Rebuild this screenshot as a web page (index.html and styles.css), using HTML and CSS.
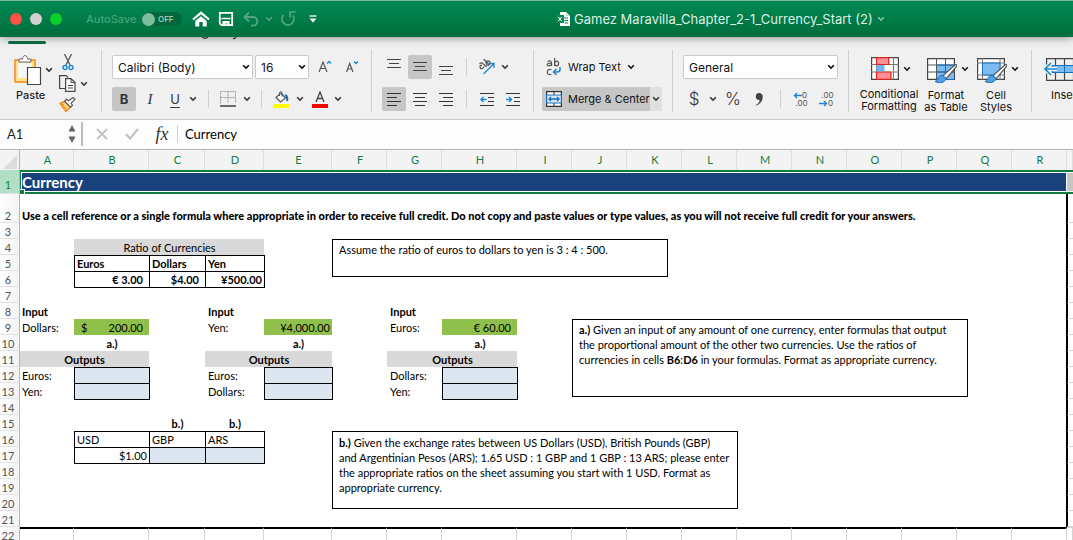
FILE: index.html
```html
<!DOCTYPE html>
<html lang="en">
<head>
<meta charset="utf-8">
<title>Gamez Maravilla_Chapter_2-1_Currency_Start (2)</title>
<link rel="stylesheet" href="styles.css">
</head>
<body>
<svg class="defs" aria-hidden="true">
  <symbol id="chev" viewBox="0 0 8 6"><path d="M1.2 1.2 4 4.2 6.8 1.2" fill="none" stroke="currentColor" stroke-width="1.6"/></symbol>
</svg>
<header class="titlebar">
  <div class="lights"><i class="red"></i><i class="gray"></i><i class="green"></i></div>
  <label class="autosave">AutoSave <span class="switch"><input type="checkbox" aria-label="AutoSave">OFF</span></label>
  <nav class="quick">
    <button aria-label="Home"><svg width="18" height="16" viewBox="0 0 18 16"><path d="M1 8.500 9 1.800l8 6.700" fill="none" stroke="#fff" stroke-width="2.200"/><path d="M3.300 9.900 9 5.200l5.700 4.700V15.500h-4v-4.500H7.300v4.500h-4z" fill="#fff"/></svg></button>
    <button aria-label="Save"><svg width="16" height="16" viewBox="0 0 16 16"><path d="M1.800 1.800h12.400v12.400H3.500l-1.700-1.700z" fill="none" stroke="#fff" stroke-width="1.800"/><path d="M3.500 7.500h9" stroke="#fff" stroke-width="1.400"/><path d="M4.500 10h7v5H9.500v-2.500H7.500V15h-3z" fill="#fff"/></svg></button>
    <button class="dim" aria-label="Undo"><svg width="16" height="16" viewBox="0 0 16 16"><path d="M6 1.500 1.500 6 6 10.500M2 6h8a4.300 4.300 0 0 1 0 8.600H8" fill="none" stroke="currentColor" stroke-width="1.800"/></svg></button>
    <button class="dim small" aria-label="Undo history"><svg width="8" height="6"><use href="#chev"/></svg></button>
    <button class="dim" aria-label="Redo"><svg width="16" height="16" viewBox="0 0 16 16"><path d="M3.500 4A6 6 0 1 0 12.800 4.500M9.500 1h6M10 1v5.500" fill="none" stroke="currentColor" stroke-width="1.700"/></svg></button>
    <button class="more" aria-label="Customize toolbar"><svg width="8" height="8" viewBox="0 0 8 8"><path d="M.5 1h7" stroke="#fff" stroke-width="1.300"/><path d="M.5 3.500h7L4 7.500z" fill="#fff"/></svg></button>
  </nav>
  <h1 class="title"><svg width="14" height="14" viewBox="0 0 14 14"><path d="M4 0h6l4 4v10H4z" fill="#fff"/><path d="M10 0v4h4" fill="#bfe0cf"/><path d="M8.500 6H12M8.500 8.500H12M8.500 11H12" stroke="#087a48"/><path d="M0 3h8v8H0z" fill="#0b8a53"/><path d="m2.300 5 3.400 4m0-4L2.300 9" stroke="#fff"/></svg>Gamez Maravilla_Chapter_2-1_Currency_Start (2)<svg class="tchev" width="8" height="6"><use href="#chev"/></svg></h1>
</header>

<div class="tabstrip"><span class="active-tab"></span><svg width="36" height="3" viewBox="0 0 36 3" aria-hidden="true"><path d="M0 0q3 2.500 6 0M34 0q-1 2-3 1.500" fill="none" stroke="#444" stroke-width="1.300"/></svg></div>

<div class="ribbon">
  <section class="group clip">
    <button class="paste"><span class="icon-row"><svg width="28" height="30" viewBox="0 0 28 30"><path d="M1 5h20v22H1z" fill="#ffdf87" stroke="#f28c1d" stroke-width="1.500"/><path d="M4 8h14v15H4z" fill="#f6f6f6"/><path d="M5 7V4h3.500C8.500-.5 13.500-.5 13.500 4H17v3z" fill="#fff" stroke="#666"/><path d="M13.500 12.500h13v17h-13z" fill="#fff" stroke="#444" stroke-width="1.200"/></svg><svg width="8" height="6"><use href="#chev"/></svg></span><span>Paste</span></button>
    <div class="clip-tools">
      <button aria-label="Cut"><svg width="12" height="17" viewBox="0 0 12 17"><path d="m2.500 0 5.500 11M9.500 0 4 11" stroke="#555" stroke-width="1.300"/><circle cx="3" cy="13.500" r="2" fill="none" stroke="#1a86d4" stroke-width="1.400"/><circle cx="9" cy="13.500" r="2" fill="none" stroke="#1a86d4" stroke-width="1.400"/></svg></button>
      <button class="copy" aria-label="Copy"><svg width="17" height="17" viewBox="0 0 17 17"><path d="M6 13.500H.6V.6H7l2 2" fill="none" stroke="#444" stroke-width="1.200"/><path d="M6.600 3.600H12l4 4v8.800H6.600z" fill="#fff" stroke="#444" stroke-width="1.200"/><path d="M12 3.600v4h4M9 10.500h5M9 13h5" fill="none" stroke="#444"/></svg><svg width="8" height="6"><use href="#chev"/></svg></button>
      <button aria-label="Format painter"><svg width="17" height="15" viewBox="0 0 17 15"><path d="M1 6.500 6 4l5.500 6L7 14.500z" fill="#ffd07a" stroke="#f28c1d" stroke-width="1.400"/><path d="m3.500 8 5 5M2 7l3 .5" stroke="#f28c1d"/><path d="M5.500 4.300 7.500 2l2 1.700L14 .5l2 1.800-4 4 1.500 1.900-2 2z" fill="#fff" stroke="#555" stroke-width="1.200"/></svg></button>
    </div>
  </section>

  <section class="group font">
    <div class="row fields">
      <span class="field"><select aria-label="Font"><option>Calibri (Body)</option></select><svg width="8" height="6"><use href="#chev"/></svg></span>
      <span class="field"><select aria-label="Font size"><option>16</option></select><svg width="8" height="6"><use href="#chev"/></svg></span>
      <button aria-label="Increase font size"><svg width="14" height="14" viewBox="0 0 14 14"><path d="M1 12 5 2l4 10M2.500 8.500h5" fill="none" stroke="#555" stroke-width="1.200"/><path d="m9 3.500 2-2 2 2" fill="none" stroke="#1a86d4" stroke-width="1.400"/></svg></button>
      <button aria-label="Decrease font size"><svg width="14" height="14" viewBox="0 0 14 14"><path d="m.5 12 3.200-8.500L7 12M1.700 9h4" fill="none" stroke="#555" stroke-width="1.200"/><path d="m8 1.500 2 2 2-2" fill="none" stroke="#1a86d4" stroke-width="1.400"/></svg></button>
    </div>
    <div class="row styles">
      <button class="on bold">B</button><button class="italic">I</button><button class="under">U</button><button aria-label="Underline options"><svg width="8" height="6"><use href="#chev"/></svg></button><i class="rule"></i>
      <button aria-label="Borders"><svg width="16" height="16" viewBox="0 0 16 16"><path d="M.5 12.500V.5h15v12M8 .5v12M.5 6.500h15" fill="none" stroke="#999" stroke-dasharray="2 1"/><path d="M0 15h16" stroke="#333" stroke-width="1.400"/></svg></button><button aria-label="Border options"><svg width="8" height="6"><use href="#chev"/></svg></button><i class="rule"></i>
      <button aria-label="Fill color"><svg width="16" height="17" viewBox="0 0 16 17"><path d="M3 6.500 8 2l4.500 5L7.500 11z" fill="#fff" stroke="#555" stroke-width="1.200"/><path d="M6.500 5V1.500q1.500-2 2.500 0v4" fill="none" stroke="#555"/><path d="M12 4q3 1 2 6" fill="none" stroke="#1a6fb8" stroke-width="2"/><path d="M0 13h16v4H0z" fill="#ff0"/></svg></button><button aria-label="Fill options"><svg width="8" height="6"><use href="#chev"/></svg></button>
      <button aria-label="Font color"><svg width="16" height="17" viewBox="0 0 16 17"><path d="M4 11 8 1l4 10M5.300 7.500h5.400" fill="none" stroke="#444" stroke-width="1.300"/><path d="M0 13h16v4H0z" fill="red"/></svg></button><button aria-label="Font color options"><svg width="8" height="6"><use href="#chev"/></svg></button>
    </div>
  </section>

  <section class="group align">
    <div class="row aligns">
      <button aria-label="Top align"><svg width="14" height="18" viewBox="0 0 14 18"><path d="M0 1.500h14M2 5.500h10M0 9.500h14" stroke="#444"/></svg></button><button class="on" aria-label="Middle align"><svg width="14" height="18" viewBox="0 0 14 18"><path d="M0 4.500h14M2 8.500h10M0 12.500h14" stroke="#444"/></svg></button><button aria-label="Bottom align"><svg width="14" height="18" viewBox="0 0 14 18"><path d="M0 8.500h14M2 12.500h10M0 16.500h14" stroke="#444"/></svg></button><i class="rule"></i>
      <button aria-label="Orientation"><svg width="18" height="16" viewBox="0 0 18 16"><g fill="none" stroke="#555" stroke-width="1.200"><path d="M1.500 5q2-2 3.500-.3L8.500 8M4 6.200Q1 7 2.300 9q2 2 3.700-1.500"/><path d="m5.500 0 5.500 5.500"/><ellipse cx="10" cy="4" rx="2" ry="2.200"/></g><path d="M5.500 15 16 4.500M11.500 4.500H16V9" fill="none" stroke="#1a86d4" stroke-width="1.300"/></svg></button><button aria-label="Orientation options"><svg class="near" width="8" height="6"><use href="#chev"/></svg></button>
    </div>
    <div class="row aligns">
      <button class="on" aria-label="Align left"><svg width="14" height="14" viewBox="0 0 14 14"><path d="M0 1.500h14M0 5.500h10M0 9.500h14M0 13.500h10" stroke="#333"/></svg></button><button aria-label="Center"><svg width="14" height="14" viewBox="0 0 14 14"><path d="M0 1.500h14M2 5.500h10M0 9.500h14M2 13.500h10" stroke="#333"/></svg></button><button aria-label="Align right"><svg width="14" height="14" viewBox="0 0 14 14"><path d="M0 1.500h14M4 5.500h10M0 9.500h14M4 13.500h10" stroke="#333"/></svg></button><i class="rule"></i>
      <button aria-label="Decrease indent"><svg width="14" height="14" viewBox="0 0 14 14"><path d="M0 1.500h14M8 5.500h6M8 9.500h6M0 13.500h14" stroke="#333"/><path d="M6.500 7.500H1M3.500 5 1 7.500 3.500 10" fill="none" stroke="#1a86d4" stroke-width="1.400"/></svg></button><button aria-label="Increase indent"><svg width="14" height="14" viewBox="0 0 14 14"><path d="M0 1.500h14M8 5.500h6M8 9.500h6M0 13.500h14" stroke="#333"/><path d="M0 7.500h5.500M3 5l2.500 2.500L3 10" fill="none" stroke="#1a86d4" stroke-width="1.400"/></svg></button>
    </div>
  </section>

  <section class="group wrap">
    <button class="wide"><svg width="16" height="18" viewBox="0 0 16 18"><g fill="none" stroke="#555" stroke-width="1.200"><path d="M1.500 3.500q3.500-1.500 4 1V8M5.500 5.200Q1 5 1 6.800 2 9 5.500 6.800M8.600 0v8"/><ellipse cx="10.600" cy="5.500" rx="2" ry="2.400"/><path d="M5.500 11.800Q1.300 10.500 1.300 14t4.200 2.200"/></g><path d="M14 9v2.500q0 2.500-3 2.500H7.500M10.500 11l-3 3 3 3" fill="none" stroke="#1a86d4" stroke-width="1.500"/></svg><span>Wrap Text</span><svg width="8" height="6"><use href="#chev"/></svg></button>
    <div class="merge"><button class="wide"><svg width="16" height="16" viewBox="0 0 16 16"><path d="M.6.600h14.800v14.800H.6z" fill="#fff" stroke="#333" stroke-width="1.200"/><path d="M8 1v3M8 12v3" stroke="#333"/><path d="M.6 4h14.800v8H.6z" fill="#d4e8fa" stroke="#1a6fb8" stroke-width="1.200"/><path d="M3 8h10M5 6 3 8l2 2M11 6l2 2-2 2" fill="none" stroke="#1a6fb8" stroke-width="1.300"/></svg><span>Merge &amp; Center</span></button><button class="drop" aria-label="Merge options"><svg width="8" height="6"><use href="#chev"/></svg></button></div>
  </section>

  <section class="group number">
    <span class="field"><select aria-label="Number format"><option>General</option></select><svg width="8" height="6"><use href="#chev"/></svg></span>
    <div class="row numbers">
      <button class="sym">$</button><button aria-label="Currency options"><svg width="8" height="6"><use href="#chev"/></svg></button><button class="sym">%</button><button aria-label="Comma style"><svg width="8" height="13" viewBox="0 0 8 13"><path d="M4 0a3.600 3.600 0 0 1 3.700 4.200Q7.500 10 1 12.800L.8 12Q4.500 10 4.600 7A3.500 3.500 0 1 1 4 0z" fill="#444"/></svg></button><i class="rule"></i>
      <button class="dec" aria-label="Increase decimal"><svg class="arr" width="9" height="7" viewBox="0 0 9 7"><path d="M9 3.500H1.500M4 1 1.500 3.500 4 6" fill="none" stroke="#1a86d4" stroke-width="1.400"/></svg><span>0</span><span class="full">.00</span></button>
      <button class="dec" aria-label="Decrease decimal"><span class="full">.00</span><svg class="arr" width="9" height="7" viewBox="0 0 9 7"><path d="M0 3.500h7.500M5 1l2.500 2.500L5 6" fill="none" stroke="#1a86d4" stroke-width="1.400"/></svg><span>0</span></button>
    </div>
  </section>

  <section class="group styles-group">
    <button class="big"><span class="icon-row"><svg width="28" height="23" viewBox="0 0 28 23"><path d="M.6.600h26.800v21.800H.6z" fill="#fff" stroke="#444" stroke-width="1.200"/><path d="M5.500 0v23M17.500 0v23M22.500 0v23M0 7.500h28M0 15h28" stroke="#777"/><path d="M13.500 8h8.500v6.500h-8.500z" fill="#fff"/><path d="M5.500.700h12.300v6.800H5.500zM5.500 15h14.500v7.300H5.500z" fill="#ff8f96" stroke="#d22" stroke-width="1.200"/><path d="M5.500 8h8v6.500h-8z" fill="#6fb4ee"/></svg><svg width="8" height="6"><use href="#chev"/></svg></span><span>Conditional<br>Formatting</span></button>
    <button class="big"><span class="icon-row"><svg width="30" height="28" viewBox="0 0 30 28"><path d="M.6 3.600h26.800v20.800H.6z" fill="#fff" stroke="#444" stroke-width="1.200"/><path d="M9.500 10H27v14.500H9.500z" fill="#7bbcf2"/><path d="M9.500 3v22M18.500 3v22M0 10h28M0 17h28" stroke="#555"/><path d="M9.500 10h18M9.500 24.500h18M18.500 10v14M9.500 17h18" stroke="#1a6fb8"/><path d="M28.500 9.500q2 0 1 2L19 24l-3.500-3z" fill="#fff" stroke="#555" stroke-width="1.200"/><path d="M15.500 20.500Q11 20.500 11 24q-.5 2-3 2.500 5 3 9 0 3-2 1.500-4z" fill="#4fa2e6" stroke="#1a6fb8"/></svg><svg width="8" height="6"><use href="#chev"/></svg></span><span>Format<br>as Table</span></button>
    <button class="big"><span class="icon-row"><svg width="30" height="28" viewBox="0 0 30 28"><path d="M.6 3.600h26.800v20.800H.6z" fill="#fff" stroke="#444" stroke-width="1.200"/><path d="M5.500 3v22M0 8h28M23 3v22M0 20h28" stroke="#777"/><path d="M5.500 8H23v12H5.500z" fill="#7bbcf2" stroke="#1a6fb8"/><path d="M28.500 9.500q2 0 1 2L19 24l-3.500-3z" fill="#fff" stroke="#555" stroke-width="1.200"/><path d="M15.500 20.500Q11 20.500 11 24q-.5 2-3 2.500 5 3 9 0 3-2 1.500-4z" fill="#4fa2e6" stroke="#1a6fb8"/></svg><svg width="8" height="6"><use href="#chev"/></svg></span><span>Cell<br>Styles</span></button>
  </section>

  <section class="group insert">
    <button class="big"><svg width="36" height="23" viewBox="0 0 36 23"><path d="M2.600 7V.600H36M36 22.400H2.600V15M11.500 0v23M20.500 0v23M29.500 0v23" fill="none" stroke="#444" stroke-width="1.200"/><path d="M8 7.500h28v7H8z" fill="#7bbcf2" stroke="#1a6fb8"/><path d="M20.500 7.500v7M29.500 7.500v7" stroke="#1a6fb8"/><path d="M13 11H1.500M7 5 1 11l6 6" fill="none" stroke="#f0f0f0" stroke-width="4"/><path d="M13 11H1.500M7 5 1 11l6 6" fill="none" stroke="#1a86d4" stroke-width="1.600"/></svg><span>Insert</span></button>
  </section>
</div>

<div class="formula">
  <div class="namebox"><input value="A1" aria-label="Name box"><svg width="8" height="18" viewBox="0 0 8 18"><path d="M.5 6.500 4 0l3.500 6.500zM.5 11.500h7L4 18z" fill="#666"/></svg></div>
  <button aria-label="Cancel"><svg width="12" height="12" viewBox="0 0 12 12"><path d="m1 1 10 10M11 1 1 11" stroke="#c4c4c4" stroke-width="2"/></svg></button>
  <button aria-label="Enter"><svg width="14" height="12" viewBox="0 0 14 12"><path d="m1 6 4 4.500L13 1" fill="none" stroke="#c4c4c4" stroke-width="2.200"/></svg></button>
  <button class="fx">fx</button><i class="rule"></i>
  <input class="content" value="Currency" aria-label="Formula">
</div>

<main class="sheet">
<table>
  <colgroup><col class="h"><col class="a"><col class="b"><col class="c"><col class="d"><col class="e"><col class="n"><col class="n"><col class="b"><col class="n"><col class="n"><col class="n"><col class="n"><col class="n"><col class="n"><col class="n"><col class="n"><col class="n"><col class="n"><col></colgroup>
  <thead><tr><th class="corner"><svg width="16" height="16" viewBox="0 0 16 16"><path d="M15 1v14H1z" fill="#dcdcdc"/></svg></th><th>A</th><th>B</th><th>C</th><th>D</th><th>E</th><th>F</th><th>G</th><th>H</th><th>I</th><th>J</th><th>K</th><th>L</th><th>M</th><th>N</th><th>O</th><th>P</th><th>Q</th><th>R</th><th></th></tr></thead>
  <tbody>
  <tr class="r1"><th>1</th><td colspan="18" class="selected">Currency<i class="handle"></i></td><td class="rest"></td></tr>
  <tr class="r2"><th>2</th><td colspan="18">Use a cell reference or a single formula where appropriate in order to receive full credit. Do not copy and paste values or type values, as you will not receive full credit for your answers.</td><td></td></tr>
  <tr><th>3</th><td colspan="18"></td><td></td></tr>
  <tr><th>4</th><td></td><td colspan="3" class="head">Ratio of Currencies</td><td colspan="14"></td><td></td></tr>
  <tr class="strong"><th>5</th><td></td><td class="box">Euros</td><td class="box">Dollars</td><td class="box">Yen</td><td colspan="14"></td><td></td></tr>
  <tr class="strong"><th>6</th><td></td><td class="box acct">€ 3.00</td><td class="box acct">$4.00</td><td class="box num">¥500.00</td><td colspan="14"></td><td></td></tr>
  <tr><th>7</th><td colspan="18"></td><td></td></tr>
  <tr class="strong"><th>8</th><td colspan="3">Input</td><td colspan="3">Input</td><td colspan="12">Input</td><td></td></tr>
  <tr><th>9</th><td>Dollars:</td><td class="green acct"><span>$</span>200.00</td><td></td><td>Yen:</td><td class="green num">¥4,000.00</td><td></td><td>Euros:</td><td class="green acct">€ 60.00</td><td colspan="10"></td><td></td></tr>
  <tr class="strong mid"><th>10</th><td></td><td>a.)</td><td colspan="2"></td><td>a.)</td><td colspan="2"></td><td>a.)</td><td colspan="10"></td><td></td></tr>
  <tr class="strong"><th>11</th><td colspan="2" class="head">Outputs</td><td></td><td colspan="2" class="head">Outputs</td><td></td><td colspan="2" class="head">Outputs</td><td colspan="10"></td><td></td></tr>
  <tr><th>12</th><td>Euros:</td><td class="box blue"></td><td></td><td>Euros:</td><td class="box blue"></td><td></td><td>Dollars:</td><td class="box blue"></td><td colspan="10"></td><td></td></tr>
  <tr><th>13</th><td>Yen:</td><td class="box blue"></td><td></td><td>Dollars:</td><td class="box blue"></td><td></td><td>Yen:</td><td class="box blue"></td><td colspan="10"></td><td></td></tr>
  <tr><th>14</th><td colspan="18"></td><td></td></tr>
  <tr class="strong mid"><th>15</th><td colspan="2"></td><td>b.)</td><td>b.)</td><td colspan="14"></td><td></td></tr>
  <tr><th>16</th><td></td><td class="box">USD</td><td class="box">GBP</td><td class="box">ARS</td><td colspan="14"></td><td></td></tr>
  <tr><th>17</th><td></td><td class="box num">$1.00</td><td class="box blue"></td><td class="box blue"></td><td colspan="14"></td><td></td></tr>
  <tr><th>18</th><td colspan="18"></td><td></td></tr>
  <tr><th>19</th><td colspan="18"></td><td></td></tr>
  <tr><th>20</th><td colspan="18"></td><td></td></tr>
  <tr><th>21</th><td colspan="18"></td><td></td></tr>
  <tr class="below"><th>22</th><td></td><td></td><td></td><td></td><td></td><td></td><td></td><td></td><td></td><td></td><td></td><td></td><td></td><td></td><td></td><td></td><td></td><td></td><td></td></tr>
  </tbody>
</table>
<p class="note ratio">Assume the ratio of euros to dollars to yen is 3 : 4 : 500.</p>
<p class="note part-a"><b>a.)</b> Given an input of any amount of one currency, enter formulas that output<br>the proportional amount of the other two currencies. Use the ratios of<br>currencies in cells <b>B6</b>:<b>D6</b> in your formulas. Format as appropriate currency.</p>
<p class="note part-b"><b>b.)</b> Given the exchange rates between US Dollars (USD), British Pounds (GBP)<br>and Argentinian Pesos (ARS); 1.65 USD : 1 GBP and 1 GBP : 13 ARS; please enter<br>the appropriate ratios on the sheet assuming you start with 1 USD. Format as<br>appropriate currency.</p>
</main>
</body>
</html>
```

FILE: styles.css
```css
* { box-sizing: border-box; }
body { margin: 0; height: 100vh; overflow: hidden; display: flex; flex-direction: column; background: #fff; color: #000; font-family: Inter, "Liberation Sans", sans-serif; font-size: 11px; }
.defs { position: absolute; width: 0; height: 0; }
button { border: 0; padding: 0; margin: 0; background: none; font: inherit; color: #333; display: flex; align-items: center; justify-content: center; }
svg { display: block; flex: none; }

.titlebar { flex: none; display: flex; align-items: center; height: 37px; padding-left: 10px; background: linear-gradient(#008a53, #006e3d); border-top: 1px solid #7fb99c; position: relative; z-index: 1; box-shadow: 0 1px 8px rgba(0,0,0,.4); }
.lights { display: flex; gap: 8px; width: 76px; }
.lights i { width: 12px; height: 12px; border-radius: 50%; }
.red { background: #ff5147; }
.gray { background: #d1d0d2; }
.lights .green { background: #09d02b; }
.autosave { display: flex; align-items: center; justify-content: space-between; width: 96px; color: #45a37a; font-weight: 500; }
.switch { display: flex; align-items: center; width: 40px; height: 14px; border-radius: 7px; background: #04663c; color: #9fc9b4; font-size: 8px; font-weight: 600; gap: 3px; }
.switch input { appearance: none; margin: 0; width: 13px; height: 13px; border-radius: 50%; background: #7fbd9f; }
.quick { display: flex; align-items: center; margin-left: 6px; }
.quick button { width: 25px; }
.quick .dim { color: #56a683; }
.quick .small { width: 12px; }
.quick .more { width: 26px; }
.title { flex: 1; display: flex; align-items: center; gap: 4px; margin: 0; padding-left: 230px; color: #dcefe5; font-size: 13px; font-weight: 400; white-space: nowrap; }
.tchev { color: #8cc4a8; }

.tabstrip { flex: none; display: flex; height: 7px; padding-left: 8px; gap: 156px; background: #f0f0f0; }
.active-tab { width: 38px; height: 3px; margin-top: 4px; border-radius: 2px; background: #0b6f42; }

.ribbon { flex: none; display: flex; height: 76px; padding-top: 6px; background: #f0f0f0; border-bottom: 1px solid #c9c9c9; overflow: hidden; }
.group { flex: none; height: 62px; padding: 5px 10px 0; border-left: 1px solid #cfcfcf; display: flex; flex-direction: column; gap: 8px; }
.group:first-child { border-left: 0; }
.row { display: grid; height: 24px; align-items: stretch; }
.rule { width: 1px; height: 18px; background: #cfcfcf; align-self: center; justify-self: center; }
.on { background: #c6c6c6; border-radius: 2px; }
.icon-row { display: flex; align-items: center; gap: 4px; }

.clip { flex-direction: row; width: 101px; padding: 5px 0 0 14px; gap: 6px; }
.paste { flex-direction: column; justify-content: flex-start; align-items: flex-start; gap: 3px; font-weight: 500; color: #222; width: 39px; }
.paste .icon-row { gap: 3px; }
.paste > span:last-child { padding-left: 2px; }
.clip-tools { display: grid; grid-template-rows: 15px 17px 15px; gap: 5px; width: 30px; }
.clip-tools button { width: 17px; }
.clip-tools .copy { width: 29px; gap: 4px; }

.font { width: 270px; }
.fields { grid-template-columns: 141px 54px 28px 24px; column-gap: 2px; }
.field { display: grid; height: 24px; align-items: center; }
.field select { grid-area: 1 / 1; width: 100%; height: 24px; appearance: none; background: #fff; border: 1px solid #cacaca; border-radius: 2px; padding: 0 5px; font-family: inherit; font-size: 12px; color: #111; }
.field svg { grid-area: 1 / 1; justify-self: end; margin-right: 3px; pointer-events: none; }
.styles { grid-template-columns: 24px 28px 22px 14px 16px 24px 14px 14px 26px 12px 28px 8px; }
.bold { font-size: 13px; font-weight: 700; }
.italic { font-family: "Liberation Serif", serif; font-style: italic; font-size: 15px; }
.under { font-size: 13px; text-decoration: underline; text-underline-offset: 3px; }

.align { width: 162px; }
.aligns { grid-template-columns: 24px 28px 24px 16px 26px 26px; }
.aligns .on { width: 24px; justify-self: center; }
.near { margin-right: 16px; }
.wrap { width: 139px; padding: 5px 8px 0; }
.wide { height: 24px; gap: 6px; padding-left: 4px; justify-content: flex-start; color: #111; }
.merge { display: flex; width: 120px; background: #c6c6c6; border-radius: 2px; }
.merge .wide { flex: 1; white-space: nowrap; }
.drop { width: 12px; background: #e0e0e0; }
.number { width: 176px; }
.numbers { grid-template-columns: 22px 16px 24px 28px 14px 26px 26px; }
.sym { font-size: 17px; font-weight: 300; }
.dec { display: grid; grid-template-columns: 9px 6px; align-content: center; justify-content: center; align-items: center; line-height: 8px; font-size: 8px; color: #555; }
.dec .full { grid-column: 1 / 3; justify-self: end; }

.styles-group { flex-direction: row; width: 183px; padding: 5px 0 0 8px; gap: 0; }
.big { flex-direction: column; justify-content: flex-start; gap: 6px; line-height: 12px; color: #111; text-align: center; }
.big .icon-row { height: 30px; padding-left: 4px; }
.styles-group .big { width: 64px; }
.styles-group .big + .big { width: 50px; }
.insert { padding: 8px 0 0 12px; }
.insert .big { gap: 8px; width: 42px; align-items: flex-start; }
.insert span { padding-left: 7px; }

.formula { flex: none; display: flex; align-items: stretch; height: 30px; padding: 2px 0 3px; background: #fdfdfd; border-bottom: 1px solid #b5b5b5; font-family: Lato, sans-serif; }
.formula input { min-width: 0; border: 0; background: none; padding: 0; font-family: inherit; font-size: 13px; color: #222; }
.namebox { display: flex; align-items: center; width: 83px; padding: 0 5px 0 7px; border-right: 2px solid #bbb; }
.namebox input { flex: 1; }
.formula button { width: 30px; }
.formula > button:nth-of-type(1) { margin-left: 4px; }
.formula .fx { width: 30px; font-family: "Liberation Serif", serif; font-style: italic; font-size: 18px; }
.formula .content { flex: 1; padding-left: 7px; color: #000; }

.sheet { flex: 1; position: relative; overflow: hidden; font-family: Lato, sans-serif; font-size: 11px; }
table { width: 100%; table-layout: fixed; border-collapse: separate; border-spacing: 0; }
.h { width: 20px; } .a { width: 54px; } .b { width: 75px; } .c { width: 56px; } .d { width: 59px; } .e { width: 68px; } .n { width: 55px; }
th, td { height: 16px; padding: 2px 2px 0 3px; line-height: 14px; white-space: nowrap; vertical-align: bottom; text-align: left; }
thead th { height: 20px; line-height: 20px; padding: 0 0 0 2px; text-align: center; color: #107c48; font-weight: 400; background: #f3f3f3; border-right: 1px solid #dedede; }
thead .corner { border-right: 1px solid #b5b5b5; padding: 0; }
thead .corner svg { margin: 3px 0 0 2px; }
tbody th { padding: 2px 3px 0 0; text-align: center; font-weight: 400; color: #555; background: linear-gradient(90deg, #fff, #f3f3f3); border-right: 1px solid #b5b5b5; border-bottom: 1px solid #e2e2e2; line-height: 13px; }
tbody th + td { padding-left: 2px; }
tbody td:nth-last-child(2) { border-right: 1px solid #000; }
tbody td:last-child { border-left: 1px solid #000; border-bottom: 1px solid #d4d4d4; }
.r1 th { background: #b3dfc5; color: #107c48; padding-bottom: 2px; }
.r1 .selected { position: relative; height: 24px; line-height: 18px; padding: 0 0 1px 1px; border: solid #107c41; border-width: 2px 0 2px 1px; background: #17427c; box-shadow: inset 0 0 0 1px #fff; color: #fff; font-size: 15px; font-weight: 700; vertical-align: middle; }
.r1 .rest { border: solid #107c41; border-width: 2px 0; background: #c6c6c6; box-shadow: inset 0 1px #fff, inset 0 -1px #fff; }
.handle { position: absolute; left: -1px; bottom: -2px; width: 5px; height: 5px; background: #107c41; border: solid #fff; border-width: 1px 1px 0 0; }
.r2 th, .r2 td { height: 29px; }
.r2 td { font-weight: 900; }
.strong td { font-weight: 700; }
.mid td, .head { text-align: center; }
.head { background: #d9d9d9; }
.box { box-shadow: inset 1px 1px #000, 1px 1px #000, 1px 0 #000, 0 1px #000; }
.num { text-align: right; }
.acct { text-align: right; padding-right: 6px; }
.acct span { float: left; padding-left: 4px; }
.green { background: #8fc04b; }
.blue { background: #dce6f1; }
.below td { border-top: 2px solid #000; border-right: 1px solid #d4d4d4; }
tbody .below td:nth-last-child(2) { border-right-color: #d4d4d4; }
tbody .below td:last-child { border-top: 1px solid #d4d4d4; border-left: 0; }

.note { position: absolute; margin: 0; padding: 2px 6px; background: #fff; border: 1px solid #000; line-height: 15px; white-space: nowrap; }
.ratio { left: 332px; top: 89px; width: 336px; height: 38px; }
.part-a { left: 572px; top: 169px; width: 396px; height: 78px; }
.part-b { left: 332px; top: 281px; width: 406px; height: 78px; padding-top: 3px; }
```
